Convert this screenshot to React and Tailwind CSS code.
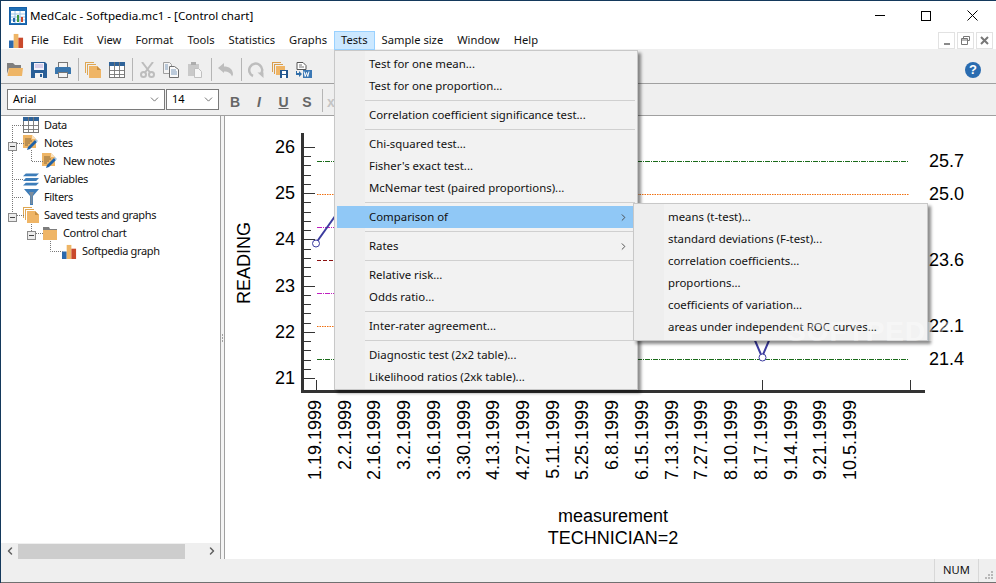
import React from "react";
import { ChevronDown, ChevronRight, ChevronLeft } from "lucide-react";

const Pages = ({ s = 16 }) => (
  <svg width={s} height={s} viewBox="0 0 16 16">
    <path d="M0 0h9v1H1v10H0z" fill="#dfa753" />
    <path d="M2 2h9v1H3v10H2z" fill="#dfa753" />
    <path d="M4 4h8l4 4v8H4z" fill="#efb566" />
    <path d="M12 4l4 4h-4z" fill="#c98f3f" />
  </svg>
);
const Folder = () => (
  <svg width="16" height="15" viewBox="0 0 16 15">
    <path d="M0 1h6l2 2h6v3H2L0 12z" fill="#7f7f7f" />
    <path d="M2 6h14l-1 8H0.500z" fill="#eeb566" />
  </svg>
);
const Save = () => (
  <svg width="16" height="16" viewBox="0 0 16 16">
    <path d="M0 0h14l2 2v14H0z" fill="#2a5f97" />
    <rect x="3" y="1" width="10" height="7" fill="#f4f2fa" />
    <path d="M4 3h8M4 5h8" stroke="#b8a8d8" />
    <rect x="4" y="11" width="8" height="5" fill="#f4f4f4" />
    <rect x="9" y="12" width="2" height="3" fill="#2a5f97" />
  </svg>
);
const Printer = () => (
  <svg width="16" height="16" viewBox="0 0 16 16">
    <rect x="3.500" y=".5" width="9" height="5" fill="#f4f4f4" stroke="#777" />
    <path d="M1 5h14l1 1v6h-3v-2H3v2H0V6z" fill="#3a76ad" />
    <rect x="3.500" y="10.500" width="9" height="5" fill="#f4f4f4" stroke="#777" />
  </svg>
);
const Table = () => (
  <svg width="16" height="16" viewBox="0 0 16 16">
    <rect x=".5" y=".5" width="15" height="15" fill="#fff" stroke="#777" />
    <rect x="0" y="0" width="16" height="4" fill="#2f6399" />
    <path d="M5.500 0v16M10.500 0v16M0 8.500h16M0 12.500h16" stroke="#777" strokeOpacity=".9" />
  </svg>
);
const Cut = () => (
  <svg width="15" height="16" viewBox="0 0 15 16" fill="none" stroke="#bdbdbd">
    <path d="M2 0l8 10.500M13 0L5 10.500" strokeWidth="2" />
    <circle cx="3.500" cy="12.500" r="2.500" strokeWidth="2" />
    <circle cx="11.500" cy="12.500" r="2.500" strokeWidth="2" />
  </svg>
);
const Copy = () => (
  <svg width="16" height="16" viewBox="0 0 16 16">
    <path d="M.5.5h6l2 2v9h-8z" fill="#f4f4f4" stroke="#a0a0a0" />
    <path d="M6.500 4.500h5l4 3v8h-9z" fill="#fafafa" stroke="#707070" />
    <path d="M2 3h3M2 5h3M2 7h3M8 8h5M8 10h6M8 12h6" stroke="#7f9bbb" />
  </svg>
);
const Paste = () => (
  <svg width="16" height="16" viewBox="0 0 16 16">
    <path d="M1 2h11v12H1z" fill="#c9c9c9" />
    <rect x="4" y="0" width="5" height="3" fill="#adadad" />
    <path d="M7.500 6.500h4l3 3v6h-7z" fill="#f6f6f6" stroke="#c0c0c0" />
  </svg>
);
const Undo = () => (
  <svg width="16" height="14" viewBox="0 0 16 14">
    <path d="M0 5l6-5v3.500c5 0 9 2.500 9 8l-1 2c-.8-3-3.500-5-8-5V10z" fill="#bdbdbd" />
  </svg>
);
const Redo = () => (
  <svg width="16" height="16" viewBox="0 0 16 16" fill="none">
    <path d="M5 14A6.500 6.500 0 1 1 12.500 12.500" stroke="#bdbdbd" strokeWidth="2.500" />
    <path d="M9.500 10.500h6v5.500z" fill="#bdbdbd" />
  </svg>
);
const SaveStack = () => (
  <svg width="16" height="16" viewBox="0 0 16 16">
    <path d="M0 0h9v1H1v9H0z" fill="#d99e4d" />
    <path d="M2 2h9v1H3v9H2z" fill="#d99e4d" />
    <path d="M4 4h9v9H4z" fill="#efb566" />
    <path d="M8 8h8v8H8z" fill="#24588f" />
    <rect x="10" y="9" width="4" height="3" fill="#fff" />
    <rect x="10" y="13" width="4" height="3" fill="#fff" />
  </svg>
);
const WordExport = () => (
  <svg width="16" height="16" viewBox="0 0 16 16">
    <path d="M1 .5h6l3 3v4H1z" fill="#fff" stroke="#555" />
    <path d="M3 3h3M3 5h5" stroke="#777" />
    <path d="M1 9v2h2V9l3 3-3 3v-2H0V9z" fill="#2f6da8" />
    <rect x="7" y="8" width="9" height="8" fill="#3b78b5" />
    <path d="M8 9.500l1.200 5 1.300-4 1.300 4 1.200-5" stroke="#fff" fill="none" />
  </svg>
);
const Bars = ({ s = 16 }) => (
  <svg width={s} height={s} viewBox="0 0 16 16">
    <rect x="0" y="8" width="5" height="8" fill="#2a69ad" />
    <rect x="5" y="1" width="5" height="15" fill="#eeb566" />
    <rect x="10" y="5" width="5" height="11" fill="#c9492c" />
  </svg>
);
const Note = () => (
  <svg width="16" height="16" viewBox="0 0 16 16">
    <path d="M0 0h9l4 4v9H0z" fill="#eeb566" />
    <path d="M9 0l4 4H9z" fill="#fbe2bd" />
    <path d="M2 4h6M2 6h7M2 8h5M2 10h3" stroke="#8a6a3a" />
    <path d="M4 15l1-3 7-7 2 2-7 7z" fill="#1f62a8" />
    <path d="M12 5l1-1 2 2-1 1z" fill="#9cc2e8" />
  </svg>
);
const Layers = () => (
  <svg width="17" height="15" viewBox="0 0 17 15">
    <path d="M3 1h14l-3 3H0z" fill="#3d7db9" />
    <path d="M3 6h14l-3 3H0z" fill="#3d7db9" />
    <path d="M3 11h14l-3 3H0z" fill="#3d7db9" />
  </svg>
);
const Funnel = () => (
  <svg width="15" height="16" viewBox="0 0 15 16">
    <path d="M0 0h15L9 7v9H6V7z" fill="#3d7db9" />
    <path d="M5 3h5L8.500 7v8H6.500V7z" fill="#7d8d9d" />
  </svg>
);
const TreeFolder = () => (
  <svg width="14" height="13" viewBox="0 0 14 13">
    <path d="M0 0h6l1 2h7v1H0z" fill="#7d7d7d" />
    <rect x="0" y="3" width="14" height="10" fill="#efb566" />
  </svg>
);

const Sep = () => <div className="w-px h-[23px] bg-[#b5b5b5]" />;

const ui = "font-['Noto_Sans',sans-serif]";

function Tool({ children }) {
  return <div className="w-[24px] h-[24px] flex items-center justify-center">{children}</div>;
}

function Combo({ label, w }) {
  return (
    <div className={`${w} h-[21px] bg-white border border-[#7a7a7a] flex items-center justify-between pl-[5px] pr-[3px] text-[11px] text-black`}>
      <span>{label}</span>
      <ChevronDown size={13} strokeWidth={1.5} color="#555" />
    </div>
  );
}

const menuNames = [
  ["File", false], ["Edit", false], ["View", false], ["Format", false], ["Tools", false],
  ["Statistics", false], ["Graphs", false], ["Tests", true], ["Sample size", false], ["Window", false], ["Help", false],
];

function MenuItem({ label, arrow, active }) {
  return (
    <div className={`mx-[2px] h-[22px] flex items-center pl-[32px] pr-[6px] justify-between text-[11.4px] whitespace-nowrap text-[#111] ${active ? "bg-[#90c8f6]" : ""}`}>
      <span>{label}</span>
      {arrow && <ChevronRight size={11} strokeWidth={2} color="#444" />}
    </div>
  );
}
const MenuSep = () => (
  <div className="h-[7px] flex items-center ml-[30px] mr-[2px]">
    <div className="h-px w-full bg-[#d0d0d0]" />
  </div>
);

const mainMenu = [
  "Test for one mean...", "Test for one proportion...", 0,
  "Correlation coefficient significance test...", 0,
  "Chi-squared test...", "Fisher's exact test...", "McNemar test (paired proportions)...", 0,
  "*Comparison of", 0, ">Rates", 0, "Relative risk...", "Odds ratio...", 0,
  "Inter-rater agreement...", 0, "Diagnostic test (2x2 table)...", "Likelihood ratios (2xk table)...",
];
const subMenu = [
  "means (t-test)...", "standard deviations (F-test)...", "correlation coefficients...",
  "proportions...", "coefficients of variation...", "areas under independent ROC curves...",
];

function TreeRow({ pl, icon, label }) {
  return (
    <div className="h-[18px] flex items-center whitespace-nowrap" style={{ paddingLeft: pl }}>
      <div className="w-[16px] h-[16px] flex items-center justify-center">{icon}</div>
      <span className="ml-[5px]">{label}</span>
    </div>
  );
}

function TreeLines() {
  const box = (x, y, k) => (
    <g key={k}>
      <rect x={x + 0.5} y={y + 0.5} width="8" height="8" fill="#ececec" stroke="#8a8a8a" />
      <path d={`M${x + 2} ${y + 4.5}h5`} stroke="#444" />
    </g>
  );
  return (
    <svg className="absolute left-0 top-0 pointer-events-none" width="80" height="150" viewBox="1 116 80 150">
      <g stroke="#777" strokeDasharray="1 1" fill="none">
        <path d="M12.500 125V214" />
        <path d="M12 125.500h12M12 179.500h12M12 197.500h12M17 215.500h7M17 143.500h7" />
        <path d="M31.500 150V161.500h12M31.500 224v8M36 233.500h7M50.500 241V251.500h12" />
      </g>
      {box(8, 142, "a")}
      {box(8, 213, "b")}
      {box(27, 231, "c")}
    </svg>
  );
}

const ticks = Array.from({ length: 26 }, (_, i) => 378 - i * 9.24);
const dates = ["1.19.1999","2.2.1999","2.16.1999","3.2.1999","3.16.1999","3.30.1999","4.13.1999","4.27.1999","5.11.1999","5.25.1999","6.8.1999","6.15.1999","7.13.1999","7.27.1999","8.10.1999","8.17.1999","9.14.1999","9.21.1999","10.5.1999"];
const hlines = [
  [161.5, "#1a6b1a", "5 1 1 1"], [194.5, "#f07010", "1.500 1"], [227.5, "#c020c0", "5 1 1 1"],
  [260.5, "#8b1010", "4 2"], [293.5, "#c020c0", "5 1 1 1"], [326.5, "#f07010", "1.500 1"], [359.5, "#1a6b1a", "5 1 1 1"],
];
const rightLabels = [["25.7", 161], ["25.0", 194], ["23.6", 260], ["22.1", 326], ["21.4", 359]];
const leftLabels = [["26", 147], ["25", 193], ["24", 239], ["23", 286], ["22", 332], ["21", 378]];

function Chart() {
  return (
    <svg className="block w-full h-full" viewBox="225 116 771 443" fontFamily="'Liberation Sans',Arial,sans-serif" fontSize="18" fill="#000">
      {hlines.map(([y, c, d]) => (
        <line key={y} x1="317" x2="909" y1={y} y2={y} stroke={c} strokeDasharray={d} />
      ))}
      <rect x="301" y="133" width="3" height="260" fill="#333" />
      <rect x="301" y="390" width="624" height="3" fill="#333" />
      {ticks.map((y, i) => (
        <line key={i} x1="304" x2={i % 5 === 0 ? 315 : 311} y1={Math.round(y) + 0.5} y2={Math.round(y) + 0.5} stroke="#333" />
      ))}
      {[316.5, 762.5, 910.5].map((x) => (
        <line key={x} x1={x} x2={x} y1="380" y2="390" stroke="#333" />
      ))}
      <path d="M316 243L338 212" stroke="#3b3b9e" strokeWidth="2" fill="none" />
      <path d="M753.500 337L762 357L770.500 337" stroke="#3b3b9e" strokeWidth="2" fill="none" />
      <circle cx="316" cy="243.500" r="3.500" fill="#fff" stroke="#3b3b9e" />
      <circle cx="762.500" cy="357.500" r="3.500" fill="#fff" stroke="#3b3b9e" />
      {leftLabels.map(([t, y]) => (
        <text key={t} x="295" y={y + 5.5} textAnchor="end">{t}</text>
      ))}
      {rightLabels.map(([t, y]) => (
        <text key={t} x="929" y={y + 6}>{t}</text>
      ))}
      <text transform="translate(250 263) rotate(-90)" textAnchor="middle">READING</text>
      {dates.map((d, i) => (
        <text key={d} transform={`translate(${321 + i * 29.72} 400) rotate(-90)`} textAnchor="end">{d}</text>
      ))}
      <text x="613" y="522" textAnchor="middle">measurement</text>
      <text x="613" y="544" textAnchor="middle">TECHNICIAN=2</text>
    </svg>
  );
}

export default function App() {
  return (
    <div className={`relative w-[996px] h-[583px] overflow-hidden bg-white border-t border-l border-[#14395c] flex flex-col ${ui} text-[11.2px] text-[#111]`}>
      {/* Title bar */}
      <div className="h-[29px] flex items-center bg-white shrink-0">
        <div className="ml-[8px] w-[18px] h-[18px] border border-[#1560a8] bg-[#1f6fb5] flex items-end justify-center">
          <svg width="16" height="16" viewBox="0 0 16 16">
            <rect x="1" y="3" width="14" height="12" fill="#fff" />
            <path d="M1 6h14M1 9h14M1 12h14M5 3v12M10 3v12" stroke="#9cc4e6" />
            <rect x="3" y="10" width="2" height="4" fill="#2a69ad" />
            <rect x="7" y="7" width="2" height="7" fill="#3f9a3f" />
            <rect x="11" y="9" width="2" height="5" fill="#c9492c" />
          </svg>
        </div>
        <span className="ml-[3px] text-[11.6px] text-black">MedCalc - Softpedia.mc1 - [Control chart]</span>
        <div className="ml-auto flex items-center">
          <div className="w-[46px] flex justify-center"><div className="w-[10px] h-px bg-black" /></div>
          <div className="w-[46px] flex justify-center"><div className="w-[10px] h-[10px] border border-black" /></div>
          <div className="w-[46px] mr-[1px] flex justify-center">
            <svg width="11" height="11" viewBox="0 0 11 11"><path d="M.5.5l10 10M10.500.5l-10 10" stroke="#000" fill="none" /></svg>
          </div>
        </div>
      </div>

      {/* Menu bar */}
      <div className="h-[19px] flex items-start bg-white shrink-0 relative z-10">
        <div className="ml-[8px] mt-[3px]"><Bars s={15} /></div>
        {menuNames.map(([m, on]) => (
          <div key={m} className={`mt-px h-[19px] px-[6px] flex items-center border whitespace-nowrap ${on ? "bg-[#cce8ff] border-[#99d1ff]" : "border-transparent"}`}>{m}</div>
        ))}
        <div className="ml-auto flex gap-[2px] mr-[3px] mt-[2px]">
          <div className="w-[17px] h-[17px] border border-[#e2e2e2] flex items-end justify-center pb-[3px]"><div className="w-[6px] h-[2px] bg-[#8a8a8a]" /></div>
          <div className="w-[17px] h-[17px] border border-[#e2e2e2] flex items-center justify-center">
            <svg width="9" height="9" viewBox="0 0 9 9"><path d="M2.500 2.500v-2h6v4h-2M.5 2.500h6v6h-6zM.5 4h6" stroke="#777" fill="none" /></svg>
          </div>
          <div className="w-[17px] h-[17px] border border-[#e2e2e2] flex items-center justify-center">
            <svg width="9" height="9" viewBox="0 0 9 9"><path d="M1 1l7 7M8 1L1 8" stroke="#777" strokeWidth="2" fill="none" /></svg>
          </div>
        </div>
      </div>

      {/* Toolbar */}
      <div className="h-[35px] bg-[#efefef] border-b border-[#a0a0a0] flex items-center pt-[7px] pl-[2px] pr-[15px] shrink-0">
        <Tool><Folder /></Tool>
        <Tool><Save /></Tool>
        <Tool><Printer /></Tool>
        <div className="ml-[3px] mr-[2px]"><Sep /></div>
        <Tool><Pages /></Tool>
        <Tool><Table /></Tool>
        <div className="ml-[3px] mr-[2px]"><Sep /></div>
        <Tool><Cut /></Tool>
        <Tool><Copy /></Tool>
        <Tool><Paste /></Tool>
        <div className="ml-[4px] mr-[2px]"><Sep /></div>
        <Tool><Undo /></Tool>
        <div className="ml-[3px] mr-[2px]"><Sep /></div>
        <Tool><Redo /></Tool>
        <Tool><SaveStack /></Tool>
        <Tool><WordExport /></Tool>
        <div className="ml-auto w-[16px] h-[16px] rounded-full bg-[#2a6cb0] text-white flex items-center justify-center font-bold text-[13px] font-['Liberation_Sans',sans-serif]">?</div>
      </div>

      {/* Format bar */}
      <div className="h-[32px] bg-[#efefef] border-b border-[#a0a0a0] flex items-center pl-[6px] shrink-0">
        <Combo label="Arial" w="w-[158px]" />
        <div className="w-px" />
        <Combo label="14" w="w-[53px]" />
        <div className="ml-[4px] flex items-center text-[#666] text-[14px] font-bold font-['Liberation_Sans',sans-serif]">
          <div className="w-[24px] text-center pt-[5px]">B</div>
          <div className="w-[24px] text-center italic pt-[5px]">I</div>
          <div className="w-[25px] text-center underline pt-[5px]">U</div>
          <div className="w-[22px] text-center pt-[5px]">S</div>
          <div className="ml-[4px] mr-[4px] pt-[2px]"><Sep /></div>
          <div className="text-[#c4c4c4] pt-[5px]">x</div>
        </div>
      </div>

      {/* Main */}
      <div className="flex-1 min-h-0 flex">
        <div className="w-[219px] flex flex-col shrink-0">
          <div className="relative flex-1 text-[11px] tracking-[-0.35px]">
            <TreeLines />
            <TreeRow pl={22} icon={<Table />} label="Data" />
            <TreeRow pl={22} icon={<Note />} label="Notes" />
            <TreeRow pl={41} icon={<Note />} label="New notes" />
            <TreeRow pl={22} icon={<Layers />} label="Variables" />
            <TreeRow pl={22} icon={<Funnel />} label="Filters" />
            <TreeRow pl={22} icon={<Pages />} label="Saved tests and graphs" />
            <TreeRow pl={41} icon={<TreeFolder />} label="Control chart" />
            <TreeRow pl={60} icon={<Bars s={15} />} label="Softpedia graph" />
          </div>
          <div className="h-[16px] bg-[#efefef] flex items-center justify-between shrink-0">
            <div className="w-[17px] flex justify-center"><ChevronLeft size={12} strokeWidth={3} color="#606060" /></div>
            <div className="w-[167px] h-[15px] bg-[#cdcdcd]" />
            <div className="flex-1" />
            <div className="w-[17px] flex justify-center"><ChevronRight size={12} strokeWidth={3} color="#606060" /></div>
          </div>
        </div>
        <div className="w-[5px] border-x border-[#a0a0a0] bg-[#f4f4f4] flex flex-col items-center justify-center gap-px shrink-0">
          <div className="w-px h-[2px] bg-[#a0a0a0]" />
          <div className="w-px h-[2px] bg-[#a0a0a0]" />
          <div className="w-px h-[2px] bg-[#a0a0a0]" />
        </div>
        <div className="flex-1 min-w-0 bg-white"><Chart /></div>
      </div>

      {/* Status bar */}
      <div className="h-[24px] bg-[#efefef] border-b border-[#707070] flex items-stretch justify-end shrink-0">
        <div className="w-[44px] border-l border-[#d8d8d8] flex items-center justify-center text-[11.2px]">NUM</div>
        <div className="w-[18px] border-l border-[#d8d8d8] flex items-end justify-end pr-[2px] pb-[2px]">
          <svg width="9" height="9" viewBox="0 0 9 9" fill="#b8b8b8">
            <rect x="6" y="0" width="2" height="2" />
            <rect x="3" y="3" width="2" height="2" />
            <rect x="6" y="3" width="2" height="2" />
            <rect x="0" y="6" width="2" height="2" />
            <rect x="3" y="6" width="2" height="2" />
            <rect x="6" y="6" width="2" height="2" />
          </svg>
        </div>
      </div>

      {/* Tests menu */}
      <div className="absolute left-[333px] top-[49px] z-20 w-[304px] h-[340px] pt-[2px] border border-[#c8c8c8] bg-[linear-gradient(to_right,#eeeeee_30px,#f2f2f2_30px)] shadow-[3px_3px_3px_rgba(0,0,0,0.45)]">
        {mainMenu.map((it, i) => {
          if (it === 0) return <MenuSep key={i} />;
          if (it[0] === "*") return <MenuItem key={i} label={it.slice(1)} arrow active />;
          if (it[0] === ">") return <MenuItem key={i} label={it.slice(1)} arrow />;
          return <MenuItem key={i} label={it} />;
        })}
      </div>

      {/* Comparison submenu */}
      <div className="absolute left-[632px] top-[202px] z-20 w-[295px] h-[138px] pt-[2px] border border-[#c8c8c8] bg-[linear-gradient(to_right,#eeeeee_30px,#f2f2f2_30px)] shadow-[3px_3px_3px_rgba(0,0,0,0.45)]">
        {subMenu.map((s) => <MenuItem key={s} label={s} />)}
      </div>

      {/* Watermark */}
      <div className="absolute left-[786px] top-[310px] z-30 text-[28px] font-bold tracking-[1px] text-white/40 font-['Liberation_Sans',sans-serif] pointer-events-none">SOFTPEDIA</div>
    </div>
  );
}
